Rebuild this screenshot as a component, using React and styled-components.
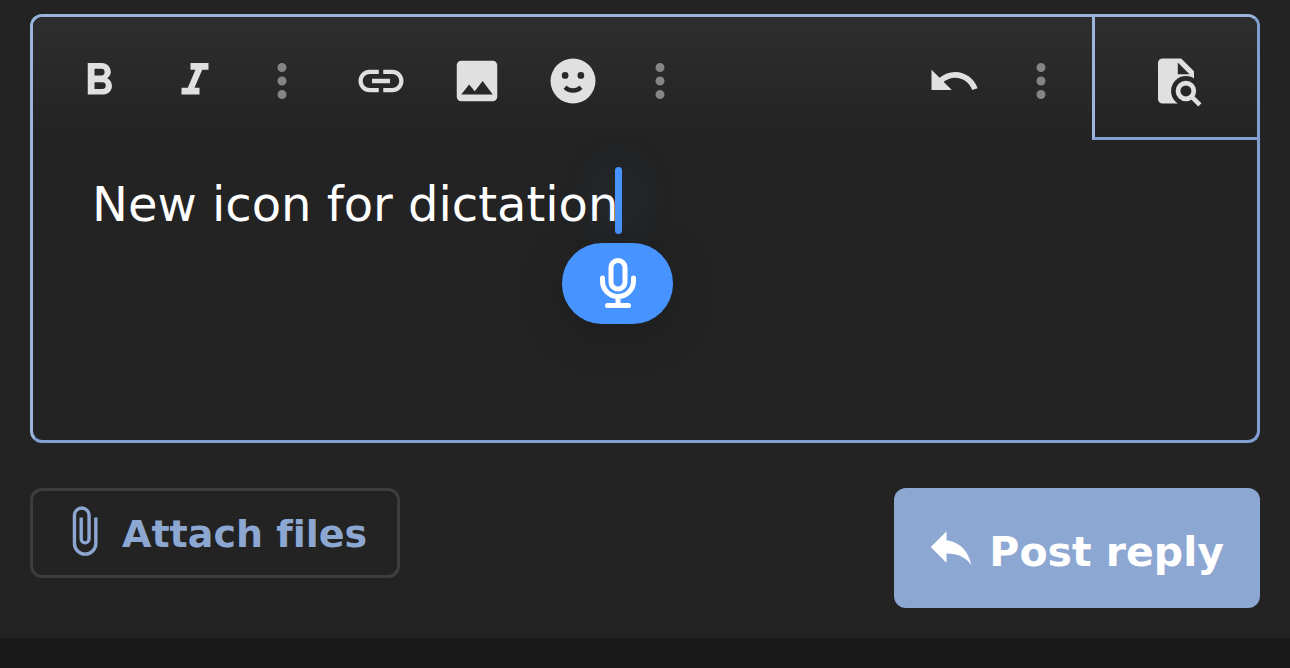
import React, { useState } from "react";
import styled, { createGlobalStyle } from "styled-components";

const GlobalStyle = createGlobalStyle`
  *, *::before, *::after { box-sizing: border-box; }
  body {
    margin: 0;
    background: #191919;
    font-family: "DejaVu Sans", Verdana, sans-serif;
    font-variant-ligatures: none;
  }
  button { font: inherit; font-variant-ligatures: none; cursor: pointer; }
`;

const Panel = styled.main`
  background: #232323;
  padding: 14px 30px 30px;
`;

const Editor = styled.section`
  border: 3px solid;
  border-color: #9ab5de #819fd3 #819fd3 #9ab5de;
  border-radius: 12px;
`;

const Toolbar = styled.div`
  display: flex;
  height: 123px;
  border-radius: 9px 9px 0 0;
  background: linear-gradient(#2e2e2e, #232323);
`;

const ToolGroup = styled.div`
  display: flex;
  height: 120px;
  padding-left: ${(p) => p.$inset || 12}px;
  margin-left: ${(p) => (p.$end ? "auto" : 0)};
  margin-right: ${(p) => (p.$end ? 12 : 0)}px;
`;

const ToolButton = styled.button`
  display: flex;
  align-items: center;
  justify-content: center;
  width: ${(p) => (p.$more ? 78 : 96)}px;
  padding: 7px 0 0;
  border: 0;
  background: none;
  color: ${(p) => (p.$more ? "#858585" : "#e0e0e0")};
`;

const PreviewButton = styled(ToolButton)`
  width: 165px;
  border-left: 3px solid #9ab5de;
  border-bottom: 3px solid #819fd3;
`;

const Icon = styled.svg`
  flex: none;
  width: 54px;
  height: 54px;
  fill: currentColor;
`;

const EditArea = styled.label`
  display: block;
  height: 300px;
  padding: 18px 59px;
  cursor: text;
`;

const TextLine = styled.span`
  position: relative;
  display: inline-flex;
  max-width: 100%;
`;

const MessageInput = styled.input`
  field-sizing: content;
  max-width: 100%;
  height: 80px;
  padding: 12px 0 0;
  border: 0;
  outline: 0;
  background: none;
  color: #fff;
  font: 48px "DejaVu Sans", Verdana, sans-serif;
  caret-color: transparent;
`;

const Caret = styled.span`
  position: absolute;
  top: 9px;
  right: -4px;
  width: 7px;
  height: 67px;
  border-radius: 4px;
  background: #4793ff;
  box-shadow: 0 0 48px rgba(71, 147, 255, 0.35);
`;

const DictationButton = styled.button`
  position: absolute;
  top: 85px;
  right: -55px;
  display: flex;
  align-items: center;
  justify-content: center;
  width: 111px;
  height: 81px;
  padding: 0 0 2px;
  border: 0;
  border-radius: 40px;
  background: #4793ff;
  color: #fff;
  box-shadow: 0 9px 48px rgba(0, 0, 0, 0.2);
`;

const MicIcon = styled.svg`
  width: 40px;
  height: 52px;
  fill: none;
  stroke: currentColor;
  stroke-width: 5;
  stroke-linecap: round;
`;

const Actions = styled.div`
  display: flex;
  align-items: flex-start;
  justify-content: space-between;
  margin-top: 45px;
`;

const ActionButton = styled.button`
  display: flex;
  align-items: center;
  gap: 11px;
  border-radius: 12px;
  font-weight: bold;
  white-space: nowrap;
`;

const AttachButton = styled(ActionButton)`
  height: 90px;
  padding: 0 30px 4px 24px;
  border: 3px solid #3d3d3d;
  background: none;
  color: #8da7d3;
  font-size: 38px;
`;

const PostButton = styled(ActionButton)`
  height: 120px;
  padding: 0 36px 3px 30px;
  border: 0;
  background: #8da7d3;
  color: #fff;
  font-size: 41px;
`;

const ActionLabel = styled.span`
  padding-top: ${(p) => (p.$large ? 10 : 6)}px;
`;

const paths = {
  bold: "M13.5,15.5H10V12.5H13.5A1.5,1.5 0 0,1 15,14A1.5,1.5 0 0,1 13.5,15.5M10,6.5H13A1.5,1.5 0 0,1 14.5,8A1.5,1.5 0 0,1 13,9.5H10M15.6,10.79C16.57,10.11 17.25,9 17.25,8C17.25,5.74 15.5,4 13.25,4H7V18H14.04C16.14,18 17.75,16.3 17.75,14.21C17.75,12.69 16.89,11.39 15.6,10.79Z",
  italic: "M10,4V7H12.21L8.79,15H6V18H14V15H11.79L15.21,7H18V4H10Z",
  more: "M12,16A2,2 0 0,1 14,18A2,2 0 0,1 12,20A2,2 0 0,1 10,18A2,2 0 0,1 12,16M12,10A2,2 0 0,1 14,12A2,2 0 0,1 12,14A2,2 0 0,1 10,12A2,2 0 0,1 12,10M12,4A2,2 0 0,1 14,6A2,2 0 0,1 12,8A2,2 0 0,1 10,6A2,2 0 0,1 12,4Z",
  link: "M3.9,12C3.9,10.29 5.29,8.9 7,8.9H11V7H7A5,5 0 0,0 2,12A5,5 0 0,0 7,17H11V15.1H7C5.29,15.1 3.9,13.71 3.9,12M8,13H16V11H8V13M17,7H13V8.9H17C18.71,8.9 20.1,10.29 20.1,12C20.1,13.71 18.71,15.1 17,15.1H13V17H17A5,5 0 0,0 22,12A5,5 0 0,0 17,7Z",
  image: "M8.5,13.5L11,16.5L14.5,12L19,18H5M21,19V5C21,3.89 20.1,3 19,3H5A2,2 0 0,0 3,5V19A2,2 0 0,0 5,21H19A2,2 0 0,0 21,19Z",
  emoji: "M12,2A10,10 0 0,0 2,12A10,10 0 0,0 12,22A10,10 0 0,0 22,12A10,10 0 0,0 12,2M8.5,8A1.5,1.5 0 0,1 10,9.5A1.5,1.5 0 0,1 8.5,11A1.5,1.5 0 0,1 7,9.5A1.5,1.5 0 0,1 8.5,8M15.5,8A1.5,1.5 0 0,1 17,9.5A1.5,1.5 0 0,1 15.5,11A1.5,1.5 0 0,1 14,9.5A1.5,1.5 0 0,1 15.5,8M12,17.23C10.25,17.23 8.71,16.5 7.81,15.42L9.23,14C9.68,14.72 10.75,15.23 12,15.23C13.25,15.23 14.32,14.72 14.77,14L16.19,15.42C15.29,16.5 13.75,17.23 12,17.23Z",
  undo: "M12.5,8C9.85,8 7.45,9 5.6,10.6L2,7V16H11L7.38,12.38C8.77,11.22 10.54,10.5 12.5,10.5C16.04,10.5 19.05,12.81 20.1,16L22.47,15.22C21.08,11.03 17.15,8 12.5,8Z",
  clip: "M16.5,6V17.5A4,4 0 0,1 12.5,21.5A4,4 0 0,1 8.5,17.5V5A2.5,2.5 0 0,1 11,2.5A2.5,2.5 0 0,1 13.5,5V15.5A1,1 0 0,1 12.5,16.5A1,1 0 0,1 11.5,15.5V6H10V15.5A2.5,2.5 0 0,0 12.5,18A2.5,2.5 0 0,0 15,15.5V5A4,4 0 0,0 11,1A4,4 0 0,0 7,5V17.5A5.5,5.5 0 0,0 12.5,23A5.5,5.5 0 0,0 18,17.5V6H16.5Z",
  reply: "M10,9V5L3,12L10,19V14.9C15,14.9 18.5,16.5 21,20C20,15 17,10 10,9Z",
};

const Glyph = ({ name }) => (
  <Icon viewBox="0 0 24 24" aria-hidden="true">
    <path fillRule="evenodd" d={paths[name]} />
  </Icon>
);

const Tool = ({ name, label }) => (
  <ToolButton type="button" aria-label={label} $more={name === "more"}>
    <Glyph name={name} />
  </ToolButton>
);

const PreviewGlyph = () => (
  <Icon viewBox="0 0 24 24" aria-hidden="true">
    <mask id="lens-gap">
      <rect width="24" height="24" fill="#fff" />
      <circle cx="16.4" cy="16.4" r="6.6" fill="#000" />
      <rect x="12.8" y="16.4" width="12" height="8" fill="#000" />
    </mask>
    <path
      mask="url(#lens-gap)"
      fillRule="evenodd"
      d="M6,2H14.3L20,7.7V22H6A2,2 0 0,1 4,20V4A2,2 0 0,1 6,2M12.8,3.8V9H18Z"
    />
    <circle cx="16.4" cy="16.4" r="3.5" fill="none" stroke="currentColor" strokeWidth="2.1" />
    <path d="M18.8,18.8L22.6,22.6" stroke="currentColor" strokeWidth="2" />
  </Icon>
);

export default function App() {
  const [message, setMessage] = useState("New icon for dictation");

  return (
    <>
      <GlobalStyle />
      <Panel>
        <Editor>
          <Toolbar role="toolbar" aria-label="Formatting">
            <ToolGroup $inset={18}>
              <Tool name="bold" label="Bold" />
              <Tool name="italic" label="Italic" />
              <Tool name="more" label="More text options" />
            </ToolGroup>
            <ToolGroup>
              <Tool name="link" label="Insert link" />
              <Tool name="image" label="Insert image" />
              <Tool name="emoji" label="Smilies" />
              <Tool name="more" label="More insert options" />
            </ToolGroup>
            <ToolGroup $end>
              <Tool name="undo" label="Undo" />
              <Tool name="more" label="More options" />
            </ToolGroup>
            <PreviewButton type="button" aria-label="Preview">
              <PreviewGlyph />
            </PreviewButton>
          </Toolbar>
          <EditArea htmlFor="message">
            <TextLine>
              <MessageInput
                id="message"
                aria-label="Message"
                spellCheck={false}
                value={message}
                onChange={(e) => setMessage(e.target.value)}
              />
              <Caret />
              <DictationButton type="button" aria-label="Dictate">
                <MicIcon viewBox="0 0 40 52" aria-hidden="true">
                  <rect x="13" y="3.5" width="14" height="28.5" rx="7" />
                  <path d="M4.5,21V24A15.5,15.5 0 0,0 35.5,24V21M20,40V48M9.5,48.5H30.5" />
                </MicIcon>
              </DictationButton>
            </TextLine>
          </EditArea>
        </Editor>
        <Actions>
          <AttachButton type="button">
            <Glyph name="clip" />
            <ActionLabel>Attach files</ActionLabel>
          </AttachButton>
          <PostButton type="button">
            <Glyph name="reply" />
            <ActionLabel $large>Post reply</ActionLabel>
          </PostButton>
        </Actions>
      </Panel>
    </>
  );
}
